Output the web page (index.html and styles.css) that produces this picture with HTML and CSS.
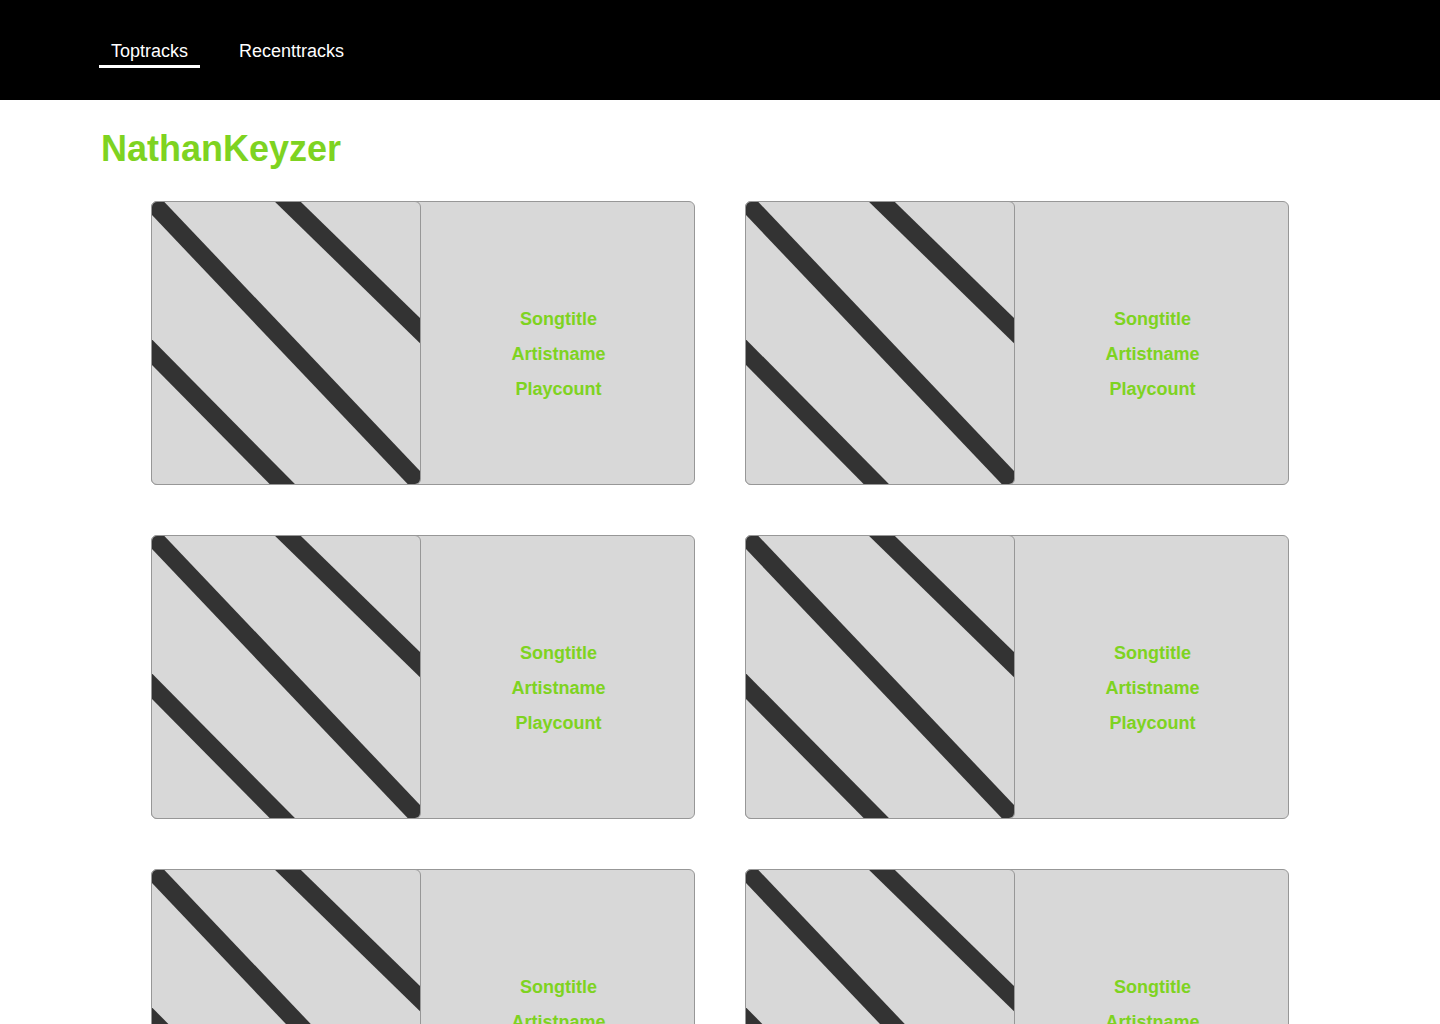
FILE: index.html
```html
<!DOCTYPE html>
<html lang="en">
<head>
<meta charset="utf-8">
<title>Toptracks</title>
<link rel="stylesheet" href="styles.css">
</head>
<body>
<header class="topbar">
  <nav class="nav">
    <a class="nav-item active" href="#">Toptracks</a>
    <a class="nav-item" href="#">Recenttracks</a>
  </nav>
</header>
<main class="page">
  <h1 class="user">NathanKeyzer</h1>
  <section class="grid">
    <article class="card"><div class="cover"><svg viewBox="0 0 268 282" preserveAspectRatio="none"><line x1="-20" y1="-21" x2="288" y2="303"/><line x1="116" y1="-19.5" x2="290" y2="150"/><line x1="-20" y1="130" x2="150" y2="302"/></svg></div><div class="info"><p>Songtitle</p><p>Artistname</p><p>Playcount</p></div></article>
    <article class="card"><div class="cover"><svg viewBox="0 0 268 282" preserveAspectRatio="none"><line x1="-20" y1="-21" x2="288" y2="303"/><line x1="116" y1="-19.5" x2="290" y2="150"/><line x1="-20" y1="130" x2="150" y2="302"/></svg></div><div class="info"><p>Songtitle</p><p>Artistname</p><p>Playcount</p></div></article>
    <article class="card"><div class="cover"><svg viewBox="0 0 268 282" preserveAspectRatio="none"><line x1="-20" y1="-21" x2="288" y2="303"/><line x1="116" y1="-19.5" x2="290" y2="150"/><line x1="-20" y1="130" x2="150" y2="302"/></svg></div><div class="info"><p>Songtitle</p><p>Artistname</p><p>Playcount</p></div></article>
    <article class="card"><div class="cover"><svg viewBox="0 0 268 282" preserveAspectRatio="none"><line x1="-20" y1="-21" x2="288" y2="303"/><line x1="116" y1="-19.5" x2="290" y2="150"/><line x1="-20" y1="130" x2="150" y2="302"/></svg></div><div class="info"><p>Songtitle</p><p>Artistname</p><p>Playcount</p></div></article>
    <article class="card"><div class="cover"><svg viewBox="0 0 268 282" preserveAspectRatio="none"><line x1="-20" y1="-21" x2="288" y2="303"/><line x1="116" y1="-19.5" x2="290" y2="150"/><line x1="-20" y1="130" x2="150" y2="302"/></svg></div><div class="info"><p>Songtitle</p><p>Artistname</p><p>Playcount</p></div></article>
    <article class="card"><div class="cover"><svg viewBox="0 0 268 282" preserveAspectRatio="none"><line x1="-20" y1="-21" x2="288" y2="303"/><line x1="116" y1="-19.5" x2="290" y2="150"/><line x1="-20" y1="130" x2="150" y2="302"/></svg></div><div class="info"><p>Songtitle</p><p>Artistname</p><p>Playcount</p></div></article>
  </section>
</main>
</body>
</html>
```
FILE: styles.css
```css
* { box-sizing: border-box; }
html, body { margin: 0; padding: 0; background: #fff; }
body { font-family: "Liberation Sans", Arial, Helvetica, sans-serif; }

.topbar {
  background: #000;
  height: 100px;
  padding: 41px 0 0 99px;
}
.nav { display: flex; gap: 27px; }
.nav-item {
  color: #fff;
  text-decoration: none;
  font-size: 18px;
  line-height: 21px;
  padding: 0 12px 3px;
  border-bottom: 3px solid transparent;
}
.nav-item.active { border-bottom-color: #fff; }

.page { padding: 28px 0 60px; }
.user {
  margin: 0 0 0 101px;
  color: #7ed321;
  font-size: 36px;
  line-height: 41px;
  font-weight: bold;
}
.grid {
  width: 1138px;
  margin: 32px auto 0;
  display: grid;
  grid-template-columns: 544px 544px;
  column-gap: 50px;
  row-gap: 50px;
}
.card {
  display: flex;
  height: 284px;
  background: #d8d8d8;
  border: 1px solid #979797;
  border-radius: 6px;
}
.cover {
  flex: none;
  width: 270px;
  margin: -1px 0 -1px -1px;
  border: 1px solid #979797;
  border-radius: 6px;
  overflow: hidden;
  background: #d8d8d8;
}
.cover svg { display: block; width: 100%; height: 100%; }
.cover line { stroke: #333; stroke-width: 18px; }
.info {
  flex: 1;
  display: flex;
  flex-direction: column;
  justify-content: center;
  align-items: center;
  padding: 22px 0 0 2px;
}
.info p {
  margin: 0;
  color: #7ed321;
  font-size: 18px;
  line-height: 35px;
  font-weight: bold;
}
```
